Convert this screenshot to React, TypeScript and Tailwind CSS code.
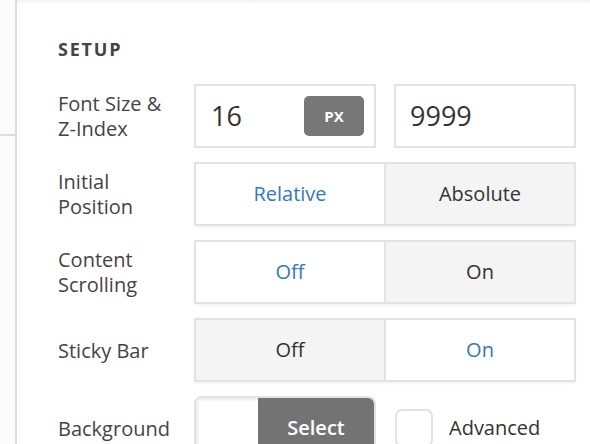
import { useState } from "react";

const BLUE = "text-[#337ab7]";

function Toggle({ left, right, value }: { left: string; right: string; value: "left" | "right" }) {
    const [v, setV] = useState(value);
    return (
        <div className="flex h-[64px] w-[382px] border-2 border-[#e2e2e2] shadow-[0_2px_2px_rgba(0,0,0,0.04)]">
            {[left, right].map((label, i) => {
                const on = (i === 0 ? "left" : "right") === v;
                return (
                    <button
                        key={label}
                        onClick={() => setV(i === 0 ? "left" : "right")}
                        className={`flex-1 flex items-center justify-center text-[20px] ${i === 0 ? "border-r-2 border-[#e2e2e2]" : ""} ${on ? `bg-white ${BLUE}` : "bg-[#f4f4f4] text-[#333]"}`}
                    >
                        {label}
                    </button>
                );
            })}
        </div>
    );
}

function Row({ label, children }: { label: React.ReactNode; children: React.ReactNode }) {
    return (
        <div className="flex items-center h-[64px]">
            <div className="w-[136px] shrink-0 text-[20px] leading-[25px] text-[#444]">{label}</div>
            {children}
        </div>
    );
}

export default function App() {
    const [advanced, setAdvanced] = useState(false);
    return (
        <div className="flex h-[444px] w-[590px] overflow-hidden bg-white font-['Open_Sans',sans-serif]">
            {/* left gutter */}
            <div className="w-[15px] shrink-0 bg-[#fbfbfb]">
                <div className="h-[136px] border-b-2 border-[#dddddd]" />
            </div>
            <div className="w-[2px] shrink-0 bg-[#dddddd]" />

            <div className="flex-1 pl-[41px] pt-[37px] bg-[linear-gradient(to_bottom,#f3f3f3,#ffffff_5px)]">
                <h2 className="text-[18px] leading-[24px] font-bold tracking-[0.1em] text-[#444]">SETUP</h2>

                <div className="mt-[23px] flex flex-col gap-[14px]">
                    <Row label={<>Font Size &amp;<br />Z-Index</>}>
                        <div className="flex gap-[18px]">
                            <div className="flex items-center justify-between w-[182px] h-[64px] border-2 border-[#e2e2e2] pl-[15px] pr-[10px]">
                                <span className="text-[27px] text-[#333]">16</span>
                                <span className="flex items-center justify-center w-[60px] h-[40px] rounded-[5px] bg-[#777] text-white text-[15px] font-bold">PX</span>
                            </div>
                            <div className="flex items-center w-[182px] h-[64px] border-2 border-[#e2e2e2] pl-[14px]">
                                <span className="text-[27px] text-[#333]">9999</span>
                            </div>
                        </div>
                    </Row>

                    <Row label={<>Initial<br />Position</>}>
                        <Toggle left="Relative" right="Absolute" value="left" />
                    </Row>

                    <Row label={<>Content<br />Scrolling</>}>
                        <Toggle left="Off" right="On" value="left" />
                    </Row>

                    <Row label="Sticky Bar">
                        <Toggle left="Off" right="On" value="right" />
                    </Row>

                    <Row label="Background">
                        <div className="flex items-center">
                            <div className="flex w-[182px] h-[64px] rounded-[8px] border-2 border-[#e2e2e2] overflow-hidden">
                                <div className="w-[62px] bg-white shadow-[inset_2px_2px_3px_rgba(0,0,0,0.08)]" />
                                <button className="flex-1 flex items-center justify-center bg-[#737373] text-white text-[20px] font-semibold">Select</button>
                            </div>
                            <button
                                onClick={() => setAdvanced(!advanced)}
                                className="ml-[19px] w-[38px] h-[38px] rounded-[7px] border-2 border-[#e2e2e2] bg-white"
                            />
                            <span className="ml-[16px] text-[20px] text-[#333]">Advanced</span>
                        </div>
                    </Row>
                </div>
            </div>
        </div>
    );
}
